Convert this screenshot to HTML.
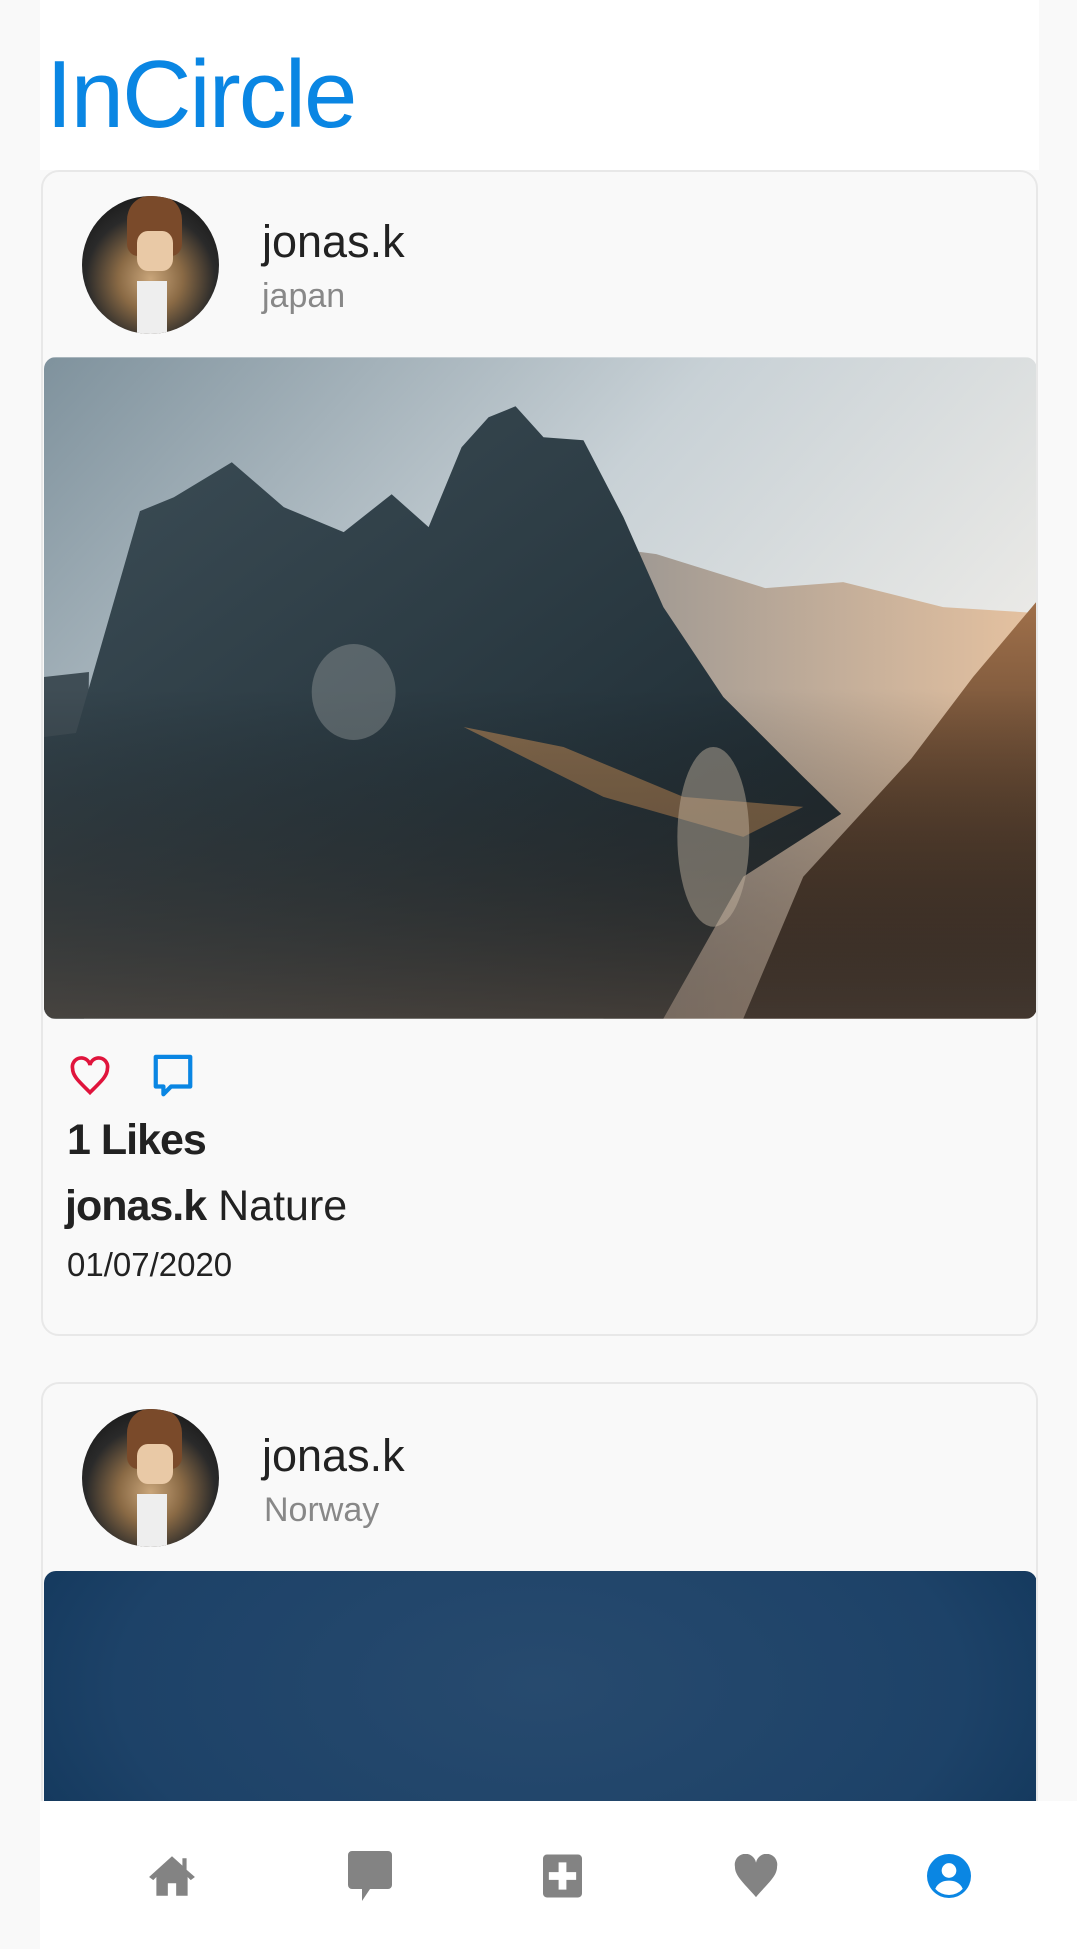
<!DOCTYPE html>
<html><head><meta charset="utf-8"><style>
*{margin:0;padding:0;box-sizing:border-box}
html,body{width:1077px;height:1949px;overflow:hidden}
body{background:#f9f9f9;font-family:"Liberation Sans",sans-serif;position:relative;color:#222}
.hdr{position:absolute;left:40px;top:0;width:999px;height:170px;background:#fff}
.hdr h1{position:absolute;left:6px;top:40px;font-size:96px;font-weight:normal;color:#0a86e3;letter-spacing:-2px}
.card{position:absolute;left:41px;width:997px;border:2px solid #e8e8e8;border-radius:18px;background:#f9f9f9;overflow:hidden}
.av{position:absolute;left:39px;width:137px;height:138px;border-radius:50%;background:radial-gradient(circle at 50% 60%,#c9a57a 0,#8a6a45 30%,#2a2a2a 60%,#0d0d0d 100%);overflow:hidden}
.un{position:absolute;left:219px;font-size:45px;color:#222}
.loc{position:absolute;left:219px;font-size:34px;color:#888}
.img{position:absolute;left:1px;width:993px;border-radius:12px;overflow:hidden}
.nav{position:absolute;left:40px;top:1801px;width:1037px;height:148px;background:#fff}
.nav svg{position:absolute;top:53px}
</style></head><body>
<div class="hdr"><h1>InCircle</h1></div>

<div class="card" style="top:170px;height:1166px">
  <div class="av" style="top:24px"><div style="position:absolute;left:45px;top:0;width:55px;height:60px;background:#7a4a2a;border-radius:40% 40% 20% 20%"></div><div style="position:absolute;left:55px;top:35px;width:36px;height:40px;background:#e9c9a6;border-radius:30%"></div><div style="position:absolute;left:55px;top:85px;width:30px;height:60px;background:#eee"></div></div>
  <div class="un" style="top:44px">jonas.k</div>
  <div class="loc" style="top:105px">japan</div>
  <div class="img" style="top:185px;height:662px">
    <svg width="993" height="662" viewBox="0 0 994 662">
      <defs>
        <linearGradient id="sky" x1="0" y1="0" x2="1" y2="0.6"><stop offset="0" stop-color="#7f929d"/><stop offset="0.5" stop-color="#c8d1d6"/><stop offset="1" stop-color="#f2efea"/></linearGradient>
        <linearGradient id="bg" x1="0" y1="0" x2="1" y2="0"><stop offset="0" stop-color="#9a9692"/><stop offset="1" stop-color="#e6c2a0"/></linearGradient>
        <linearGradient id="mt" x1="0" y1="0" x2="1" y2="1"><stop offset="0" stop-color="#3d4e57"/><stop offset="0.6" stop-color="#27363e"/><stop offset="1" stop-color="#1a2328"/></linearGradient>
        <linearGradient id="rt" x1="0" y1="0" x2="0" y2="1"><stop offset="0" stop-color="#a0704a"/><stop offset="1" stop-color="#1e1a18"/></linearGradient>
        <linearGradient id="fg" x1="0" y1="0" x2="0" y2="1"><stop offset="0.5" stop-color="#000" stop-opacity="0"/><stop offset="1" stop-color="#5a4a3e" stop-opacity="0.6"/></linearGradient>
      </defs>
      <rect width="994" height="662" fill="url(#sky)"/>
      <polygon points="560,190 613,197 722,231 800,225 900,250 994,256 994,662 560,662" fill="url(#bg)"/>
      <polygon points="0,320 45,315 40,662 0,662" fill="#3f4d55"/>
      <polygon points="32,376 96,154 130,140 188,105 240,150 300,175 348,137 385,170 418,90 445,60 472,49 500,80 540,83 580,160 620,250 680,340 760,420 798,457 700,520 620,662 0,662 0,380" fill="url(#mt)"/>
      <polygon points="420,370 520,390 640,440 760,450 700,480 560,440" fill="#9a7550" opacity="0.8"/>
      <polygon points="994,244 994,662 700,662 760,520 868,402 930,320" fill="url(#rt)"/>
      <rect width="994" height="662" fill="url(#fg)"/>
      <ellipse cx="310" cy="335" rx="42" ry="48" fill="#9aa09f" opacity="0.4"/>
      <ellipse cx="670" cy="480" rx="36" ry="90" fill="#c8b8a5" opacity="0.45"/>
    </svg>
  </div>
  <svg style="position:absolute;left:24px;top:882px" width="46" height="44" viewBox="0 0 24 24"><path d="M12 21 C6 15 2.5 12 2.5 8 A4.8 4.8 0 0 1 12 6 A4.8 4.8 0 0 1 21.5 8 C21.5 12 18 15 12 21Z" fill="none" stroke="#e0143c" stroke-width="2"/></svg>
  <svg style="position:absolute;left:107px;top:880px" width="46" height="48" viewBox="0 0 24 25"><path d="M3 2.5 H21 V18 H11 L7 22 V18 H3 Z" fill="none" stroke="#0a86e3" stroke-width="2.2" stroke-linejoin="round"/></svg>
  <div style="position:absolute;left:24px;top:944px;font-size:43px;font-weight:bold;letter-spacing:-1px">1 Likes</div>
  <div style="position:absolute;left:22px;top:1010px;font-size:43px"><b style="letter-spacing:-1px">jonas.k</b> Nature</div>
  <div style="position:absolute;left:24px;top:1074px;font-size:33px">01/07/2020</div>
</div>

<div class="card" style="top:1382px;height:567px;border-bottom:none;border-radius:18px 18px 0 0">
  <div class="av" style="top:25px"><div style="position:absolute;left:45px;top:0;width:55px;height:60px;background:#7a4a2a;border-radius:40% 40% 20% 20%"></div><div style="position:absolute;left:55px;top:35px;width:36px;height:40px;background:#e9c9a6;border-radius:30%"></div><div style="position:absolute;left:55px;top:85px;width:30px;height:60px;background:#eee"></div></div>
  <div class="un" style="top:46px">jonas.k</div>
  <div class="loc" style="top:107px;left:221px">Norway</div>
  <div class="img" style="top:187px;height:380px;border-radius:12px 12px 0 0;background:radial-gradient(ellipse at 50% 30%,#274a6e 0,#1d4268 60%,#0a2f52 100%)"></div>
</div>

<div class="nav">
  <svg style="left:107px" width="50" height="44" viewBox="0 0 24 21"><path d="M12 1 L1 11 L3 12.5 L4.5 11 V20 H10 V14 H14 V20 H19.5 V11 L21 12.5 L23 11 L19 7.5 V2 H17 V5.5 Z" fill="#838383"/></svg>
  <svg style="left:308px;top:50px" width="44" height="50" viewBox="0 0 22 25"><path d="M2 0 H20 A2 2 0 0 1 22 2 V17 A2 2 0 0 1 20 19 H11 L7 25 V19 H2 A2 2 0 0 1 0 17 V2 A2 2 0 0 1 2 0Z" fill="#838383"/></svg>
  <svg style="left:503px" width="39" height="44" viewBox="0 0 20 22"><rect x="0" y="0" width="20" height="22" rx="2" fill="#838383"/><path d="M8 4 H12 V9 H17 V13 H12 V18 H8 V13 H3 V9 H8Z" fill="#fff"/></svg>
  <svg style="left:693px" width="46" height="44" viewBox="0 0 24 22"><path d="M12 22 C5 14 1 11 1 6 A5.5 5.5 0 0 1 12 4 A5.5 5.5 0 0 1 23 6 C23 11 19 14 12 22Z" fill="#838383"/></svg>
  <svg style="left:887px" width="44" height="44" viewBox="0 0 24 24"><circle cx="12" cy="12" r="12" fill="#0a86e3"/><circle cx="12" cy="9" r="4" fill="#fff"/><path d="M4.5 19 C6 15.5 9 14.5 12 14.5 C15 14.5 18 15.5 19.5 19 A10 10 0 0 1 4.5 19Z" fill="#fff"/></svg>
</div>
</body></html>
